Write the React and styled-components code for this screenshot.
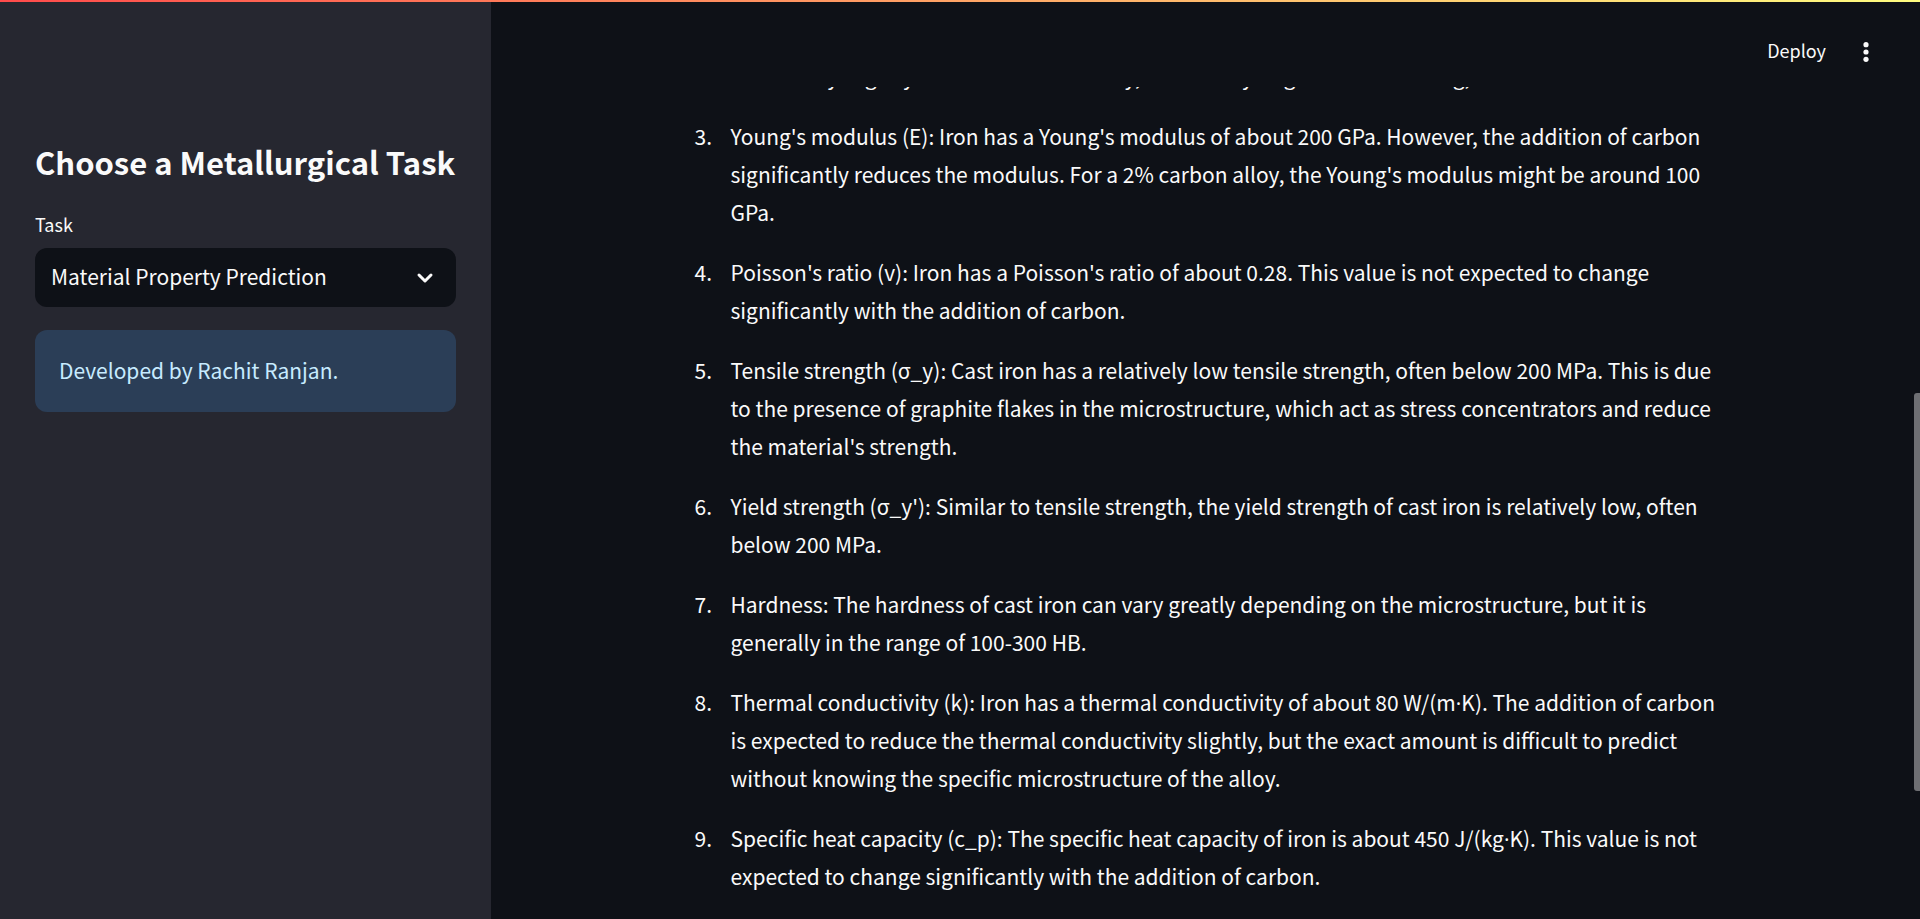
import React from "react";
import styled, { createGlobalStyle } from "styled-components";

const GlobalStyle = createGlobalStyle`
  *, *::before, *::after { box-sizing: border-box; }
  body {
    margin: 0;
    background: #0e1117;
    color: #fafafa;
    font-family: "Noto Sans CJK SC", "Noto Sans", sans-serif;
    font-size: 21px;
    line-height: 38px;
  }
`;

const Page = styled.div`
  position: relative;
  display: flex;
  height: 100vh;
  overflow: hidden;
`;

const Decoration = styled.div`
  position: absolute;
  inset: 0 0 auto 0;
  height: 2px;
  background: linear-gradient(90deg, #ff4b4b, #fffd80);
`;

const Sidebar = styled.aside`
  flex: none;
  width: 491px;
  padding: 138px 35px 35px;
  background: #262730;
`;

const Title = styled.h2`
  margin: 0 0 24px;
  font-size: 31px;
  font-weight: 600;
  line-height: 48px;
  white-space: nowrap;
`;

const Label = styled.label`
  display: block;
  margin-bottom: 10px;
  font-size: 18px;
  line-height: 28px;
`;

const SelectBox = styled.div`
  display: grid;
  align-items: center;
  margin-bottom: 23px;

  > * { grid-area: 1 / 1; }
`;

const Select = styled.select`
  appearance: none;
  width: 100%;
  height: 59px;
  padding: 0 60px 3px 16px;
  border: 0;
  border-radius: 12px;
  background: #0e1117;
  color: #fafafa;
  font: inherit;
`;

const Chevron = styled.svg`
  justify-self: end;
  margin-right: 19px;
  pointer-events: none;
`;

const Notice = styled.div`
  padding: 21px 24px 23px;
  border-radius: 12px;
  background: #2b3e57;
  color: #c7ebff;
`;

const Main = styled.main`
  flex: 1;
  min-width: 0;
  display: flex;
  flex-direction: column;
`;

const Toolbar = styled.header`
  flex: none;
  display: flex;
  justify-content: flex-end;
  align-items: center;
  gap: 22px;
  height: 87px;
  padding: 16px 36px 0 0;
`;

const ToolButton = styled.button`
  display: flex;
  align-items: center;
  justify-content: center;
  min-width: 36px;
  height: 38px;
  padding: 0;
  border: 0;
  background: none;
  color: inherit;
  font: inherit;
  font-size: 18px;
  line-height: 34px;
`;

const DeployButton = styled(ToolButton)`
  align-items: flex-start;
`;

const Viewport = styled.section`
  flex: 1;
  min-height: 0;
  overflow: hidden;
`;

const Answer = styled.ol`
  display: flex;
  flex-direction: column;
  gap: 22px;
  width: 100%;
  max-width: 1034px;
  margin: -30px auto 0;
  padding: 0 0 0 42px;
  list-style: none;
`;

const Item = styled.li`
  display: flex;
`;

const Marker = styled.span`
  flex: none;
  width: 36px;
  margin-left: -36px;
`;

const Dot = styled.span`
  font-family: "Open Sans", "Noto Sans", sans-serif;
  line-height: 1;
`;

const ScrollThumb = styled.div`
  position: absolute;
  top: 393px;
  right: 0;
  width: 6px;
  height: 398px;
  border-radius: 3px 0 0 3px;
  background: #6e6f73;
`;

const properties = [
  ["", "would vary slightly due to the actual alloy, but is fairly large for steel casting,"],
  ["3.", "Young's modulus (E): Iron has a Young's modulus of about 200 GPa. However, the addition of carbon significantly reduces the modulus. For a 2% carbon alloy, the Young's modulus might be around 100 GPa."],
  ["4.", "Poisson's ratio (v): Iron has a Poisson's ratio of about 0.28. This value is not expected to change significantly with the addition of carbon."],
  ["5.", "Tensile strength (σ_y): Cast iron has a relatively low tensile strength, often below 200 MPa. This is due to the presence of graphite flakes in the microstructure, which act as stress concentrators and reduce the material's strength."],
  ["6.", "Yield strength (σ_y'): Similar to tensile strength, the yield strength of cast iron is relatively low, often below 200 MPa."],
  ["7.", "Hardness: The hardness of cast iron can vary greatly depending on the microstructure, but it is generally in the range of 100-300 HB."],
  ["8.", <>Thermal conductivity (k): Iron has a thermal conductivity of about 80 W/(m<Dot>·</Dot>K). The addition of carbon is expected to reduce the thermal conductivity slightly, but the exact amount is difficult to predict without knowing the specific microstructure of the alloy.</>],
  ["9.", <>Specific heat capacity (c_p): The specific heat capacity of iron is about 450 J/(kg<Dot>·</Dot>K). This value is not expected to change significantly with the addition of carbon.</>],
];

export default function App() {
  return (
    <Page>
      <GlobalStyle />
      <Sidebar>
        <Title>Choose a Metallurgical Task</Title>
        <Label htmlFor="task">Task</Label>
        <SelectBox>
          <Select id="task" defaultValue="property">
            <option value="property">Material Property Prediction</option>
          </Select>
          <Chevron width="24" height="24" viewBox="0 0 24 24" fill="none" stroke="#fafafa" strokeWidth="3" strokeLinecap="round" strokeLinejoin="round" aria-hidden="true">
            <path d="M6 9l6 6 6-6" />
          </Chevron>
        </SelectBox>
        <Notice>Developed by Rachit Ranjan.</Notice>
      </Sidebar>
      <Main>
        <Toolbar>
          <DeployButton type="button">Deploy</DeployButton>
          <ToolButton type="button" aria-label="Main menu">
            <svg width="24" height="24" viewBox="0 0 24 24" fill="#fafafa" aria-hidden="true">
              <circle cx="12" cy="4.7" r="2.6" />
              <circle cx="12" cy="12" r="2.6" />
              <circle cx="12" cy="19.3" r="2.6" />
            </svg>
          </ToolButton>
        </Toolbar>
        <Viewport>
          <Answer>
            {properties.map(([number, text], index) => (
              <Item key={index}>
                <Marker>{number}</Marker>
                <div>{text}</div>
              </Item>
            ))}
          </Answer>
        </Viewport>
      </Main>
      <Decoration />
      <ScrollThumb />
    </Page>
  );
}
